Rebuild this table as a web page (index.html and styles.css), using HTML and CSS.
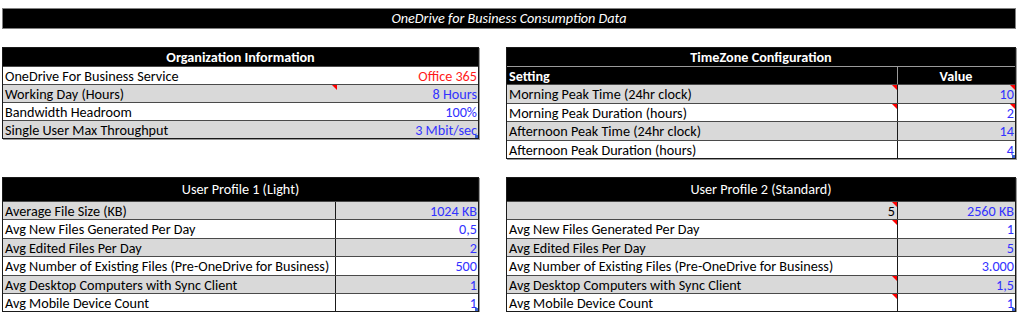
FILE: index.html
```html
<!DOCTYPE html>
<html>
<head>
<meta charset="utf-8">
<link rel="stylesheet" href="styles.css">
</head>
<body>
<div class="page">
  <div class="title">OneDrive for Business Consumption Data</div>
  <div class="grid">
    <div class="tbl org">
      <div class="hdr bold">Organization Information</div>
      <div class="row white"><span class="lbl">OneDrive For Business Service</span><span class="val red">Office 365</span></div>
      <div class="row gray"><span class="lbl">Working Day (Hours)</span><span class="val">8 Hours</span><i class="flag flag-org"></i></div>
      <div class="row white"><span class="lbl">Bandwidth Headroom</span><span class="val">100%</span></div>
      <div class="row gray"><span class="lbl">Single User Max Throughput</span><span class="val">3 Mbit/sec</span><i class="handle"></i></div>
    </div>

    <div class="tbl tz">
      <div class="hdr bold">TimeZone Configuration</div>
      <div class="row sub"><span class="cl bold">Setting</span><span class="cv bold center">Value</span></div>
      <div class="row gray"><span class="cl flagged">Morning Peak Time (24hr clock)</span><span class="cv num flagged">10</span></div>
      <div class="row white"><span class="cl flagged">Morning Peak Duration (hours)</span><span class="cv num flagged">2</span></div>
      <div class="row gray"><span class="cl">Afternoon Peak Time (24hr clock)</span><span class="cv num">14</span></div>
      <div class="row white"><span class="cl">Afternoon Peak Duration (hours)</span><span class="cv num">4<i class="handle"></i></span></div>
    </div>

    <div class="tbl up up1">
      <div class="hdr tall">User Profile 1 (Light)</div>
      <div class="row gray"><span class="cl">Average File Size (KB)</span><span class="cv num">1024 KB</span></div>
      <div class="row white"><span class="cl">Avg New Files Generated Per Day</span><span class="cv num">0,5</span></div>
      <div class="row gray"><span class="cl">Avg Edited Files Per Day</span><span class="cv num">2</span></div>
      <div class="row white"><span class="cl">Avg Number of Existing Files (Pre-OneDrive for Business)</span><span class="cv num">500</span></div>
      <div class="row gray"><span class="cl">Avg Desktop Computers with Sync Client</span><span class="cv num">1</span></div>
      <div class="row white"><span class="cl">Avg Mobile Device Count</span><span class="cv num">1<i class="handle"></i></span></div>
    </div>

    <div class="tbl up up2">
      <div class="hdr tall">User Profile 2 (Standard)</div>
      <div class="row gray"><span class="cl right flagged">5</span><span class="cv num">2560 KB</span></div>
      <div class="row white"><span class="cl flagged">Avg New Files Generated Per Day</span><span class="cv num">1</span></div>
      <div class="row gray"><span class="cl">Avg Edited Files Per Day</span><span class="cv num">5</span></div>
      <div class="row white"><span class="cl">Avg Number of Existing Files (Pre-OneDrive for Business)</span><span class="cv num">3.000</span></div>
      <div class="row gray"><span class="cl flagged">Avg Desktop Computers with Sync Client</span><span class="cv num">1,5</span></div>
      <div class="row white"><span class="cl flagged">Avg Mobile Device Count</span><span class="cv num">1<i class="handle"></i></span></div>
    </div>
  </div>
</div>
</body>
</html>
```
FILE: styles.css
```css
* { box-sizing: border-box; }
html, body { margin: 0; padding: 0; background: #fff; }
body {
  font-family: Carlito, Lato, "Liberation Sans", sans-serif;
  font-size: 14.2px;
  color: #000;
}
.page { padding: 8px 8px 0 2px; width: 1024px; }
.title {
  width: 1014px;
  height: 21px;
  background: #000;
  border: 1px solid #808080;
  color: #fff;
  font-style: italic;
  text-align: center;
  line-height: 19px;
}
.grid {
  display: grid;
  grid-template-columns: 477px 510px;
  column-gap: 27px;
  row-gap: 18px;
  align-items: start;
  margin-top: 18px;
}
.tbl {
  border: 1px solid #1a1a1a;
  box-shadow: 1px 1px 0 #9a9a9a;
}
.hdr {
  height: 18px;
  background: #000;
  color: #fff;
  text-align: center;
  line-height: 19px;
}
.hdr.tall { height: 23px; line-height: 23px; }
.bold { font-weight: bold; }
.row {
  position: relative;
  display: flex;
  height: 18px;
  border-top: 1px solid #4a4a4a;
  line-height: 18.5px;
}
.tz .row, .up .row { height: 18.4px; }
.row.white { background: #fff; }
.row.gray { background: #d9d9d9; }
.row.sub { background: #000; color: #fff; border-top-color: #9a9a9a; }
.lbl { flex: 1; padding-left: 2px; white-space: nowrap; }
.val { padding-right: 1px; color: #3232ff; white-space: nowrap; }
.val.red { color: #ff1a1a; }
.cl {
  position: relative;
  padding-left: 2px;
  white-space: nowrap;
  overflow: hidden;
}
.up1 .cl { width: 332px; }
.tz .cl, .up2 .cl { width: 390px; }
.cv {
  position: relative;
  flex: 1;
  border-left: 1px solid #1a1a1a;
  padding-right: 1px;
  white-space: nowrap;
}
.row.sub .cv { border-left-color: #9a9a9a; }
.center { text-align: center; }
.right { text-align: right; padding-right: 2px; }
.num { text-align: right; color: #3232ff; }
.flagged::after, .flag {
  content: "";
  position: absolute;
  top: 0;
  right: 0;
  width: 0;
  height: 0;
  border-top: 5px solid #ff0000;
  border-left: 5px solid transparent;
}
.flag-org { left: 329px; right: auto; }
.handle {
  position: absolute;
  right: 0;
  bottom: 0;
  width: 3px;
  height: 3px;
  background: #3a5fcd;
}
```
